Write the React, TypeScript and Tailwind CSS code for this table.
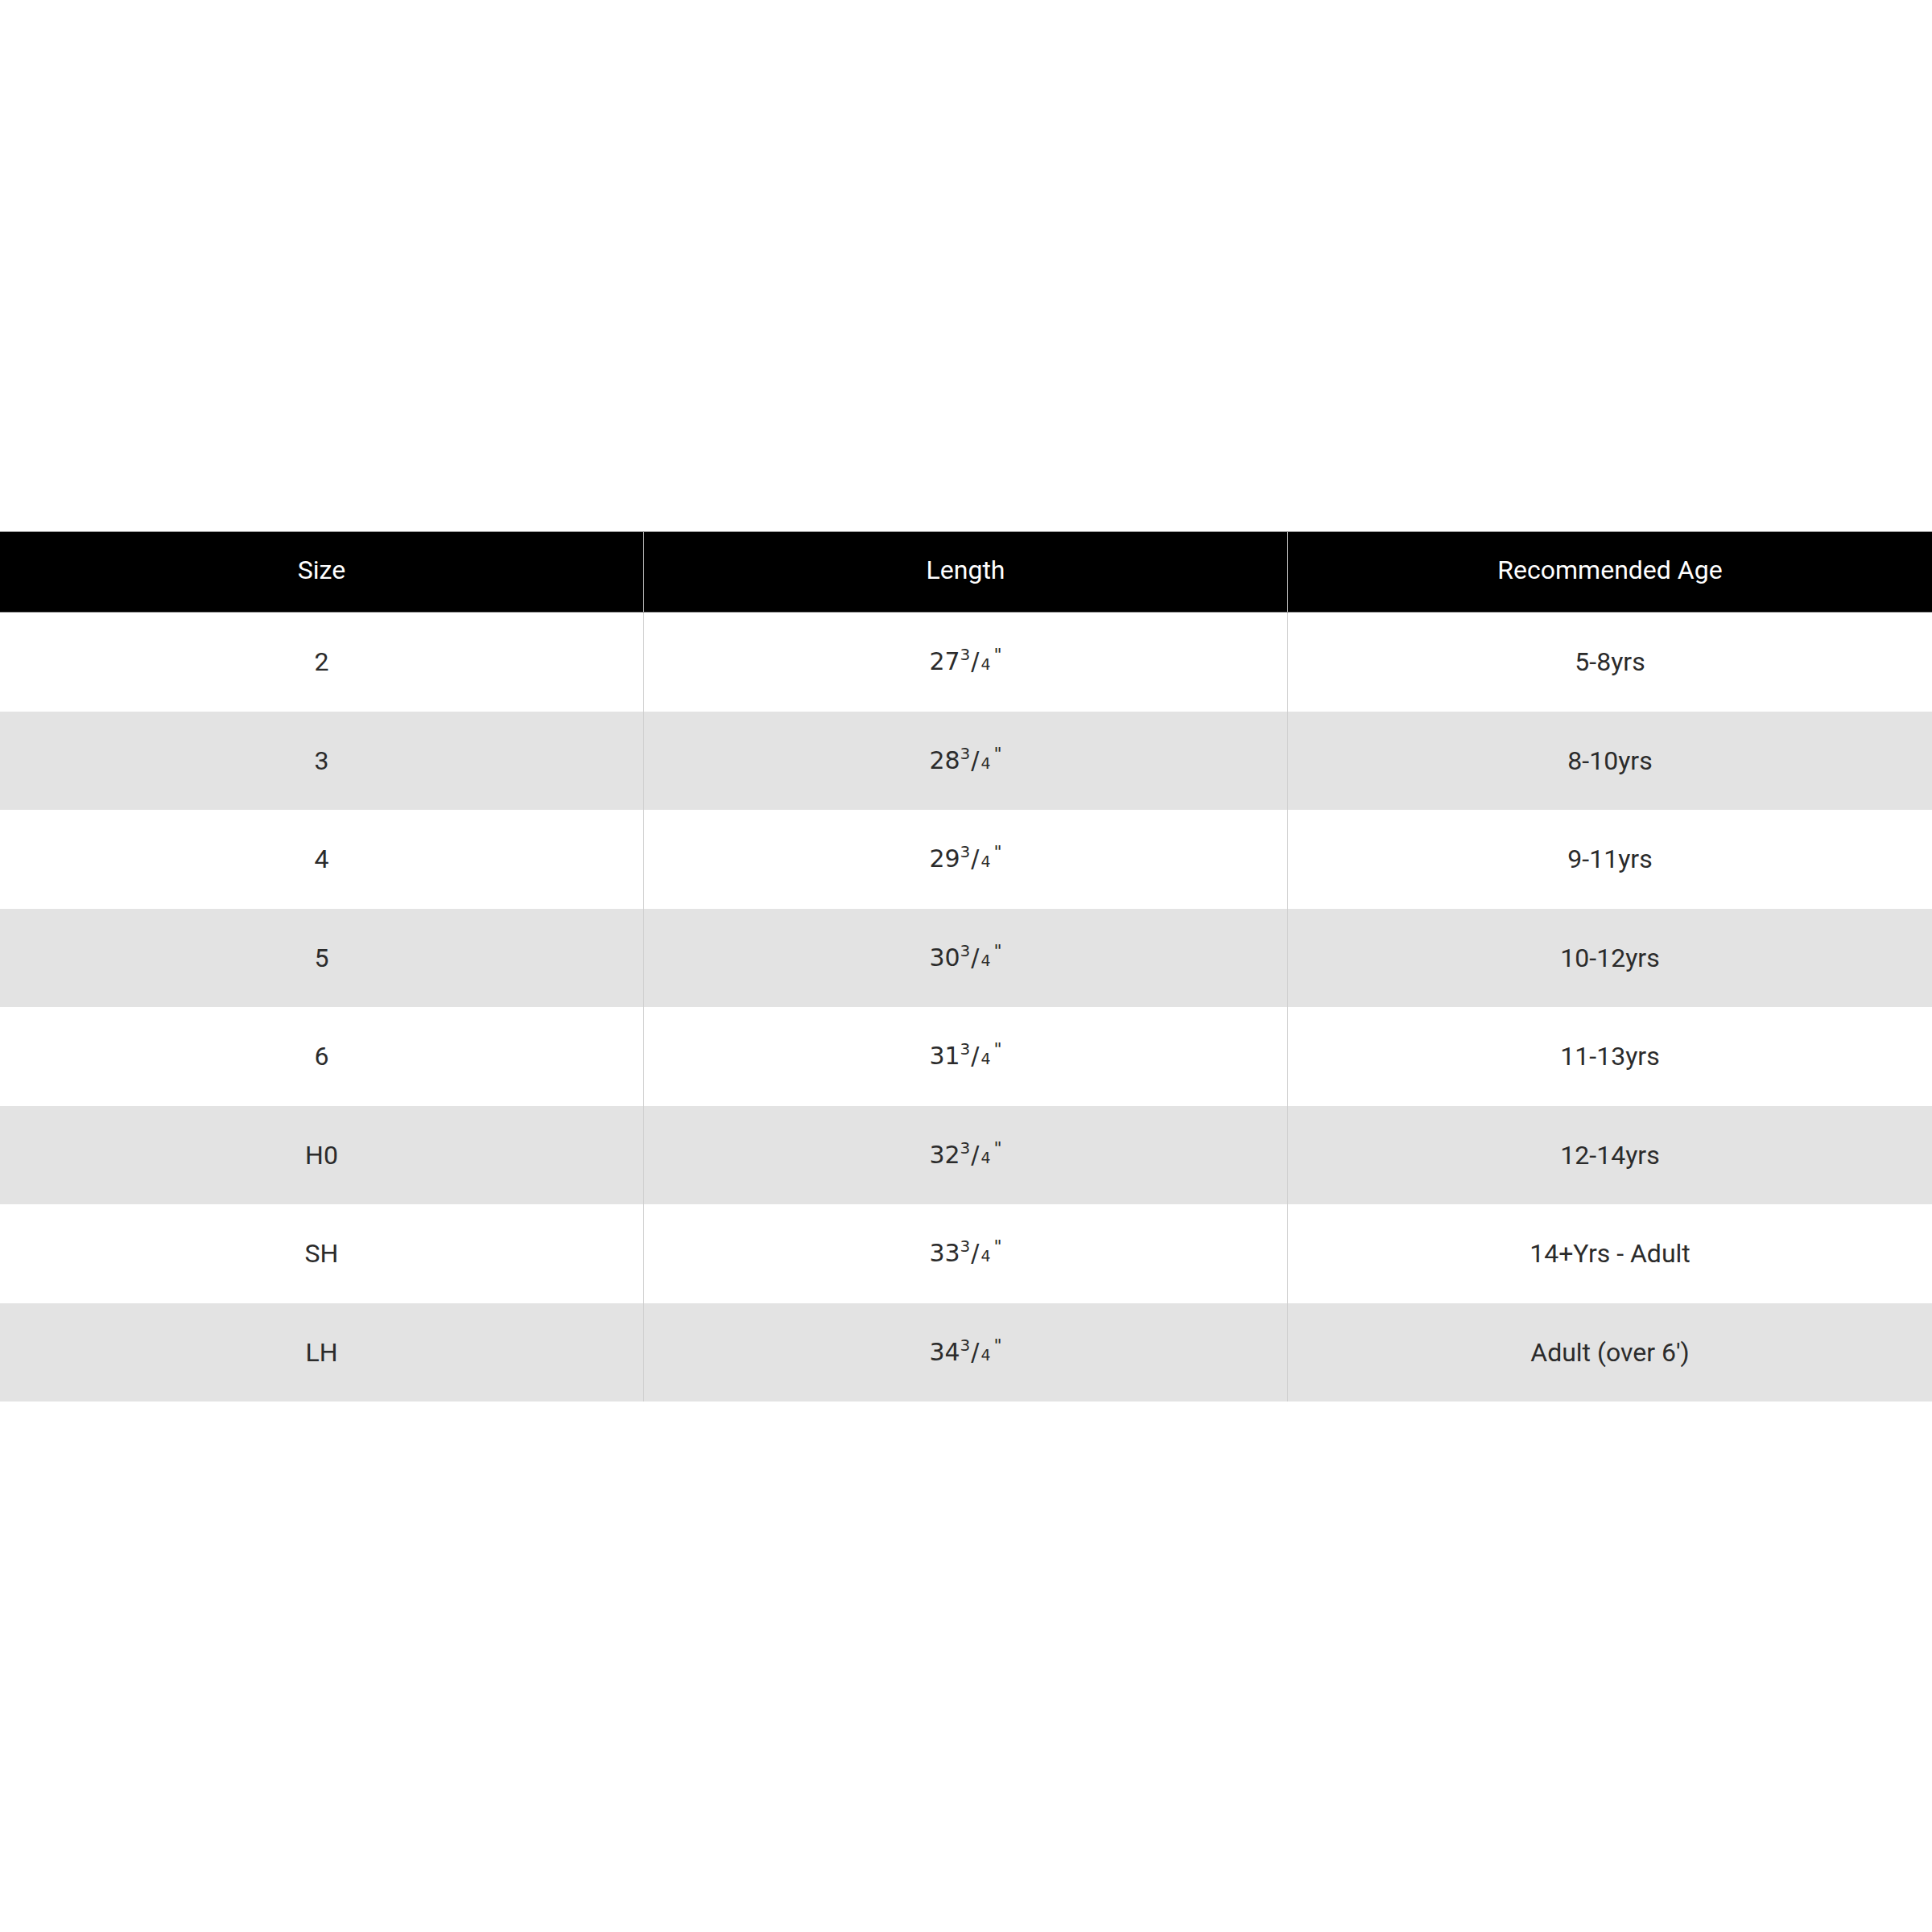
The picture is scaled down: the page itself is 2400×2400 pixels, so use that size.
const rows = [
  { size: "2", inches: "27", age: "5-8yrs" },
  { size: "3", inches: "28", age: "8-10yrs" },
  { size: "4", inches: "29", age: "9-11yrs" },
  { size: "5", inches: "30", age: "10-12yrs" },
  { size: "6", inches: "31", age: "11-13yrs" },
  { size: "H0", inches: "32", age: "12-14yrs" },
  { size: "SH", inches: "33", age: "14+Yrs - Adult" },
  { size: "LH", inches: "34", age: "Adult (over 6')" },
];

// fraction rendered the way the source image shows it: 27³/₄"
function Length({ inches }: { inches: string }) {
  return (
    <span className="inline-flex items-baseline font-['DejaVu_Sans',sans-serif] text-[30px] leading-none text-[#2b2b2b]">
      <span>{inches}</span>
      <span className="relative -top-[12px] text-[20px]">3</span>
      <span className="text-[30px] ml-[1px]">/</span>
      <span className="text-[19px] ml-[2px]">4</span>
      <span className="relative -top-[11px] text-[22px] ml-[4px]">"</span>
    </span>
  );
}

export default function App() {
  return (
    <div className="w-[2400px] h-[2400px] bg-white pt-[660px] font-['Roboto',sans-serif]">
      <div className="grid grid-cols-3 h-[101px] bg-black border-y border-[#8a8a8a] text-white text-[32px]">
        <div className="flex items-center justify-center pb-[6px] border-r border-[#bdbdbd]">Size</div>
        <div className="flex items-center justify-center pb-[6px] border-r border-[#bdbdbd]">Length</div>
        <div className="flex items-center justify-center pb-[6px]">Recommended Age</div>
      </div>
      {rows.map((r, i) => (
        <div
          key={r.size}
          className={`grid grid-cols-3 h-[122.5px] text-[32px] text-[#2b2b2b] ${i % 2 === 1 ? "bg-[#e3e3e3]" : "bg-white"}`}
        >
          <div className="flex items-center justify-center border-r border-[#cfcfcf]">{r.size}</div>
          <div className="flex items-center justify-center border-r border-[#cfcfcf]">
            <Length inches={r.inches} />
          </div>
          <div className="flex items-center justify-center">{r.age}</div>
        </div>
      ))}
    </div>
  );
}
